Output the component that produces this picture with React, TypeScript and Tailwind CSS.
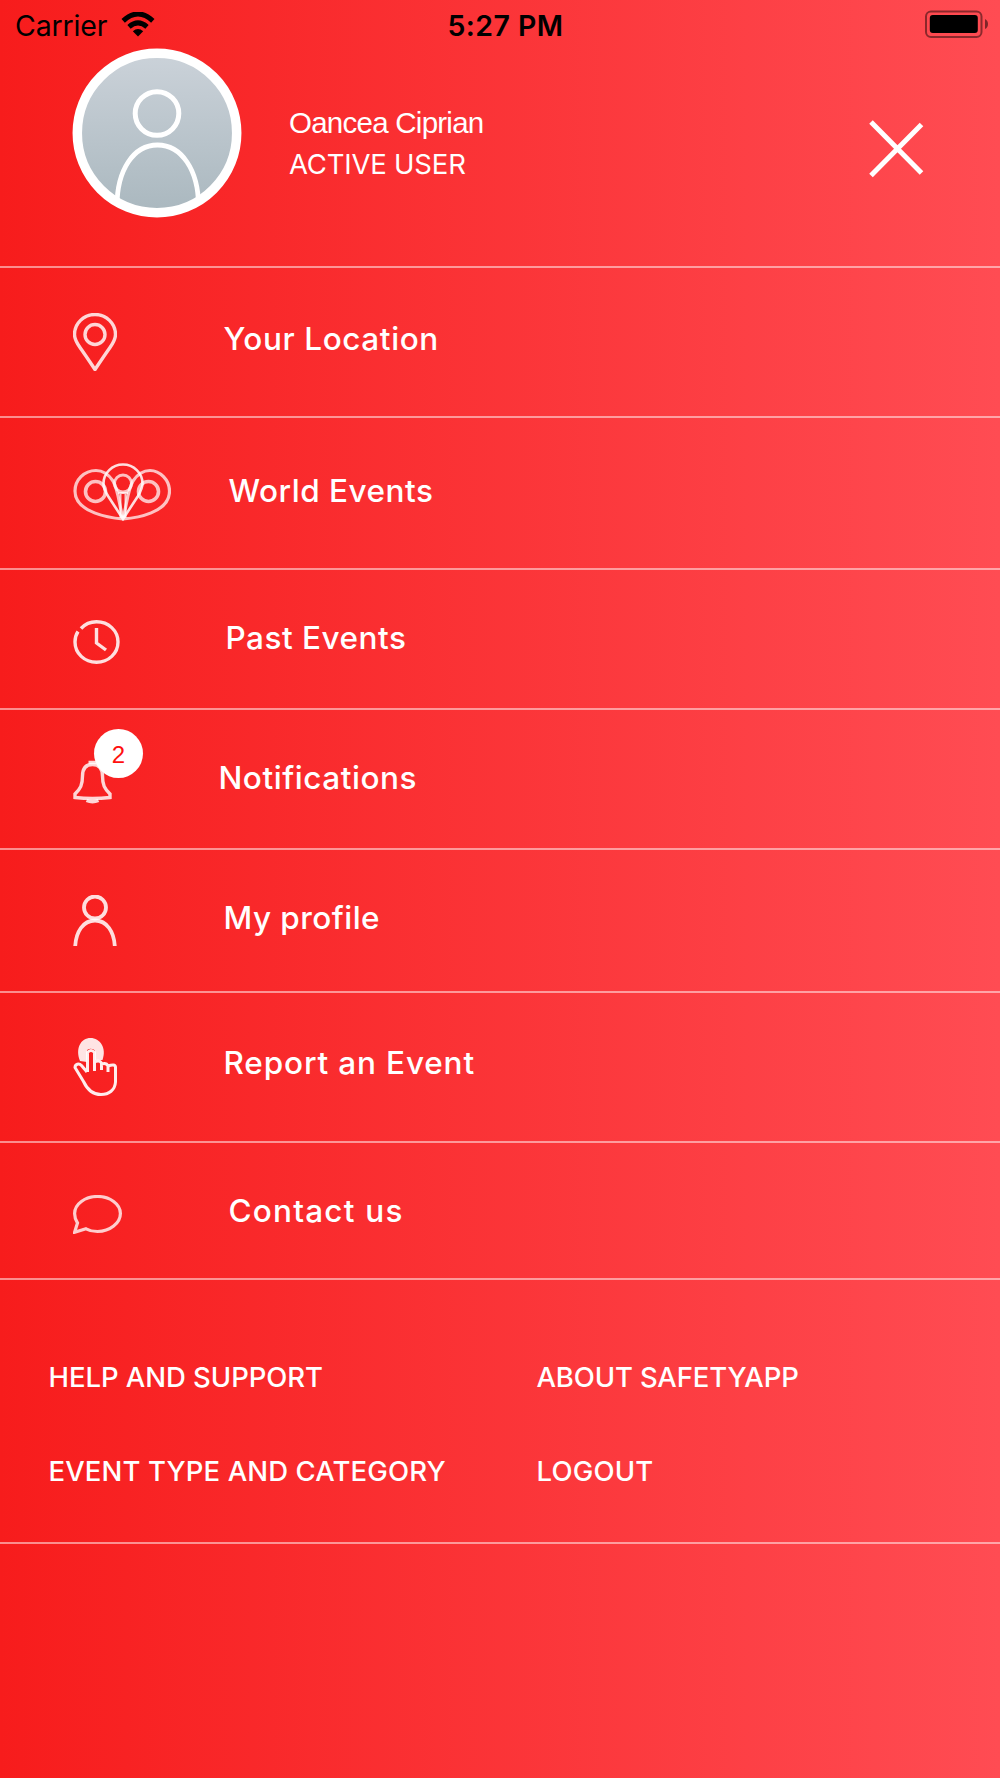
import type { ReactNode } from 'react';

const PinIcon = () => (
  <svg width="44" height="58" viewBox="0 0 44 58" fill="none" stroke="#fff" strokeOpacity="0.82" strokeWidth="3.400">
    <path d="M22 56.500C19 52 13 43 7 34.500C3.500 29.500 1.500 26 1.500 21.500a20.500 20 0 0 1 41 0c0 4.500-2 8-5.500 13C31 43 25 52 22 56.500z" />
    <circle cx="22" cy="21.500" r="10" />
  </svg>
);

const WorldIcon = () => (
  <svg width="98" height="58" viewBox="0 0 98 58" fill="none" stroke="#fff" strokeOpacity="0.72" strokeWidth="3">
    <path d="M50 56C38 55 2 50 2 28C2 17 11 7.500 23 7.500C31 7.500 36 12 40 18C46 29 46 42 50 55" strokeWidth="3.200" />
    <circle cx="22.500" cy="28.500" r="10" strokeWidth="3.600" />
    <path d="M50 56C63 55 96.500 50 96.500 28C96.500 17 87 7.500 77 7.500C69 7.500 64 12 60 18C54 29 54 42 50 55" strokeWidth="3.200" />
    <circle cx="75.500" cy="28.500" r="10" strokeWidth="3.600" />
    <path d="M50 56L35 33C32 28 30.500 25 30.500 20.500a19.500 19 0 0 1 39 0c0 4.500-2 8-4.500 12.500z" strokeOpacity="0.85" strokeWidth="2.600" />
    <circle cx="50" cy="20.500" r="8.500" />
    <path d="M45 30h10M47.500 31v24M52.500 31v24" strokeWidth="2" />
  </svg>
);

const ClockIcon = () => (
  <svg width="47" height="44" viewBox="0 0 47 44" fill="none" stroke="#fff" strokeOpacity="0.86" strokeWidth="3.400">
    <path d="M8 8.500C12 4 17 1.700 23.500 1.700c12 0 21.500 9 21.500 20.300s-9.500 20.300-21.500 20.300S2 33.300 2 22c0-4 1-7.500 3-10.500" />
    <path d="M23.500 8v15l9.500 7" />
  </svg>
);

const BellIcon = () => (
  <svg width="39" height="44" viewBox="0 0 39 44" fill="none" stroke="#fff" strokeOpacity="0.82" strokeWidth="3.400">
    <path d="M19.500 4.500C12.500 4.500 9.500 9 9.500 16c0 9-2 12.500-7.500 18v3.500q17.500 1.800 35 0V34c-5.500-5.500-7.500-9-7.500-18C29.500 9 26.500 4.500 19.500 4.500z" />
    <path d="M15.500 2.500h8M13.500 40.500q6 2.500 12 0" />
  </svg>
);

const ProfileIcon = () => (
  <svg width="44" height="51" viewBox="0 0 44 51" fill="none" stroke="#fff" strokeOpacity="0.85" strokeWidth="3.800">
    <ellipse cx="22" cy="12.500" rx="11" ry="11" />
    <path d="M2.200 51C3 37 10 25.500 22 25.500S41 37 41.800 51" />
  </svg>
);

const TouchIcon = () => (
  <svg width="44" height="58" viewBox="0 0 44 58" fill="none" stroke="#fff" strokeOpacity="0.92" strokeWidth="3" strokeLinejoin="round">
    <path d="M7 23C2 10 8 0 17.500 0S34 10 29.500 22H22v-9c-1-3-8-3-8 0v11z" fill="#fff" fillOpacity="0.88" stroke="none" />
    <path d="M14.500 34V14.500q3.500-4 7 0V33M21.500 24q5-2.500 7 1v7M28.500 26q5-1.500 6.500 2v6M35 28q7-2.500 7.500 1v15C42 52 36 56.500 28 56.500C19 56.500 14 51 10.500 43.500L2 29.500C2 26 6 25 8.500 27.500L14 34" />
  </svg>
);

const ChatIcon = () => (
  <svg width="49" height="39" viewBox="0 0 49 39" fill="none" stroke="#fff" strokeOpacity="0.78" strokeWidth="3.200">
    <path d="M1.600 37.300L4.500 28C2.500 25 1.600 22 1.600 18.500C1.600 9 12 1.500 24.500 1.500S47.400 9 47.400 18.500S37 36.500 24.500 36.500c-4.500 0-8-.800-11.500-2.700z" />
  </svg>
);

type Item = { label: string; icon: ReactNode; row: string; text: string; badge?: number };

const items: Item[] = [
  { label: 'Your Location', icon: <PinIcon />, row: 'h-[150px]', text: 'ml-[151px] -mt-[7px] tracking-[0.600px]' },
  { label: 'World Events', icon: <WorldIcon />, row: 'h-[152px] pb-[2px]', text: 'ml-[156px] -mt-[3px] tracking-[0.500px]' },
  { label: 'Past Events', icon: <ClockIcon />, row: 'h-[140px] pt-[5px]', text: 'ml-[153px] -mt-[7px] tracking-[0.500px]' },
  { label: 'Notifications', icon: <BellIcon />, row: 'h-[140px] pt-[6px]', text: 'ml-[146px] -mt-[8px] tracking-[0.550px]', badge: 2 },
  { label: 'My profile', icon: <ProfileIcon />, row: 'h-[143px]', text: 'ml-[151px] -mt-[5px] tracking-[0.450px]' },
  { label: 'Report an Event', icon: <TouchIcon />, row: 'h-[150px] pb-[1px]', text: 'ml-[151px] -mt-[7px] tracking-[0.850px]' },
  { label: 'Contact us', icon: <ChatIcon />, row: 'h-[137px] pt-[7px]', text: 'ml-[156px] -mt-[7px] tracking-[1.200px]' },
];

function StatusBar() {
  return (
    <div className="flex h-[48px] items-start justify-between pl-[15px] pr-[12px] text-[28.500px] leading-[34px] text-black">
      <div className="flex w-[304px] pt-[9px]">
        <span className="w-[106px] tracking-[-0.150px]">Carrier</span>
        <svg className="mt-[3px]" width="34" height="25" viewBox="0 0 34 25">
          <path d="M17 24.500l-5.200-5.200q5.200-4.500 10.400 0z" />
          <path d="M8 14.800q9-7.800 18 0M2.200 8.800Q17-4.800 31.800 8.800" fill="none" stroke="#000" strokeWidth="5" />
        </svg>
      </div>
      <span className="pt-[9px] font-semibold tracking-[0.450px]">5:27 PM</span>
      <div className="flex w-[296px] justify-end pt-[10px]">
        <svg width="63" height="28" viewBox="0 0 63 28">
          <rect x="1" y="1.500" width="55.500" height="25.500" rx="5" fill="none" stroke="#000" strokeOpacity="0.45" strokeWidth="2" />
          <rect x="4.800" y="5" width="48" height="18" rx="3" />
          <path d="M60 9v10q3-1.500 3-5t-3-5z" fillOpacity="0.5" />
        </svg>
      </div>
    </div>
  );
}

function Header() {
  return (
    <header className="flex h-[220px] items-start border-b-2 border-white/50 pl-[72px] pr-[76px]">
      <svg width="170" height="170" viewBox="0 0 170 170" fill="none" stroke="#fff">
        <defs>
          <linearGradient id="avatar" x1="0" y1="0" x2="0" y2="1">
            <stop offset="0" stopColor="#ccd3da" />
            <stop offset="1" stopColor="#a9b7be" />
          </linearGradient>
          <clipPath id="face">
            <circle cx="85" cy="85" r="78" />
          </clipPath>
        </defs>
        <g clipPath="url(#face)">
          <rect width="170" height="170" fill="url(#avatar)" stroke="none" />
          <circle cx="85" cy="65.500" r="21.800" strokeWidth="5" />
          <path d="M45 158C45 122 61.500 97 85.500 97s41 25 41 61" strokeWidth="4.800" />
        </g>
        <circle cx="85" cy="85" r="79.700" strokeWidth="9.500" />
      </svg>
      <div className="ml-[47px] mt-[58px] flex-1 text-white">
        <p className="font-['Liberation_Sans',sans-serif] text-[29.500px] leading-[34px] tracking-[-0.750px]">Oancea Ciprian</p>
        <p className="mt-[7px] text-[27.500px] leading-[34px] tracking-[-0.200px]">ACTIVE USER</p>
      </div>
      <svg className="mt-[72px]" width="55" height="58" viewBox="0 0 55 58" stroke="#fff" strokeWidth="5">
        <path d="M2 2L52.500 53M2 55.500L52.500 4.500" />
      </svg>
    </header>
  );
}

export default function App() {
  return (
    <div className="h-[1778px] w-[1000px] overflow-hidden bg-linear-to-r/srgb from-[#f71c1c] to-[#ff4c53] font-['Inter',sans-serif]">
      <StatusBar />
      <Header />
      <nav>
        {items.map((item) => (
          <a key={item.label} className={`flex items-center border-b-2 border-white/50 pl-[72.500px] ${item.row}`}>
            <span className="relative w-0 shrink-0">
              {item.icon}
              {item.badge && (
                <span className="absolute -top-[31px] left-[21.500px] flex size-[49px] items-center justify-center rounded-full bg-white pt-[2px] font-['Liberation_Sans',sans-serif] text-[24px] leading-none text-[#ff0f0f]">
                  {item.badge}
                </span>
              )}
            </span>
            <span className={`whitespace-nowrap text-[31.500px] font-medium leading-[40px] text-white ${item.text}`}>{item.label}</span>
          </a>
        ))}
      </nav>
      <footer className="grid h-[264px] grid-cols-[488px_1fr] content-start gap-y-[54px] border-b-2 border-white/50 pl-[48.500px] pt-[76.500px] text-[27.500px] font-medium leading-[40px] text-white">
        <a className="tracking-[-0.050px]">HELP AND SUPPORT</a>
        <a className="tracking-[-0.150px]">ABOUT SAFETYAPP</a>
        <a className="tracking-[0.120px]">EVENT TYPE AND CATEGORY</a>
        <a className="tracking-[0.200px]">LOGOUT</a>
      </footer>
    </div>
  );
}
